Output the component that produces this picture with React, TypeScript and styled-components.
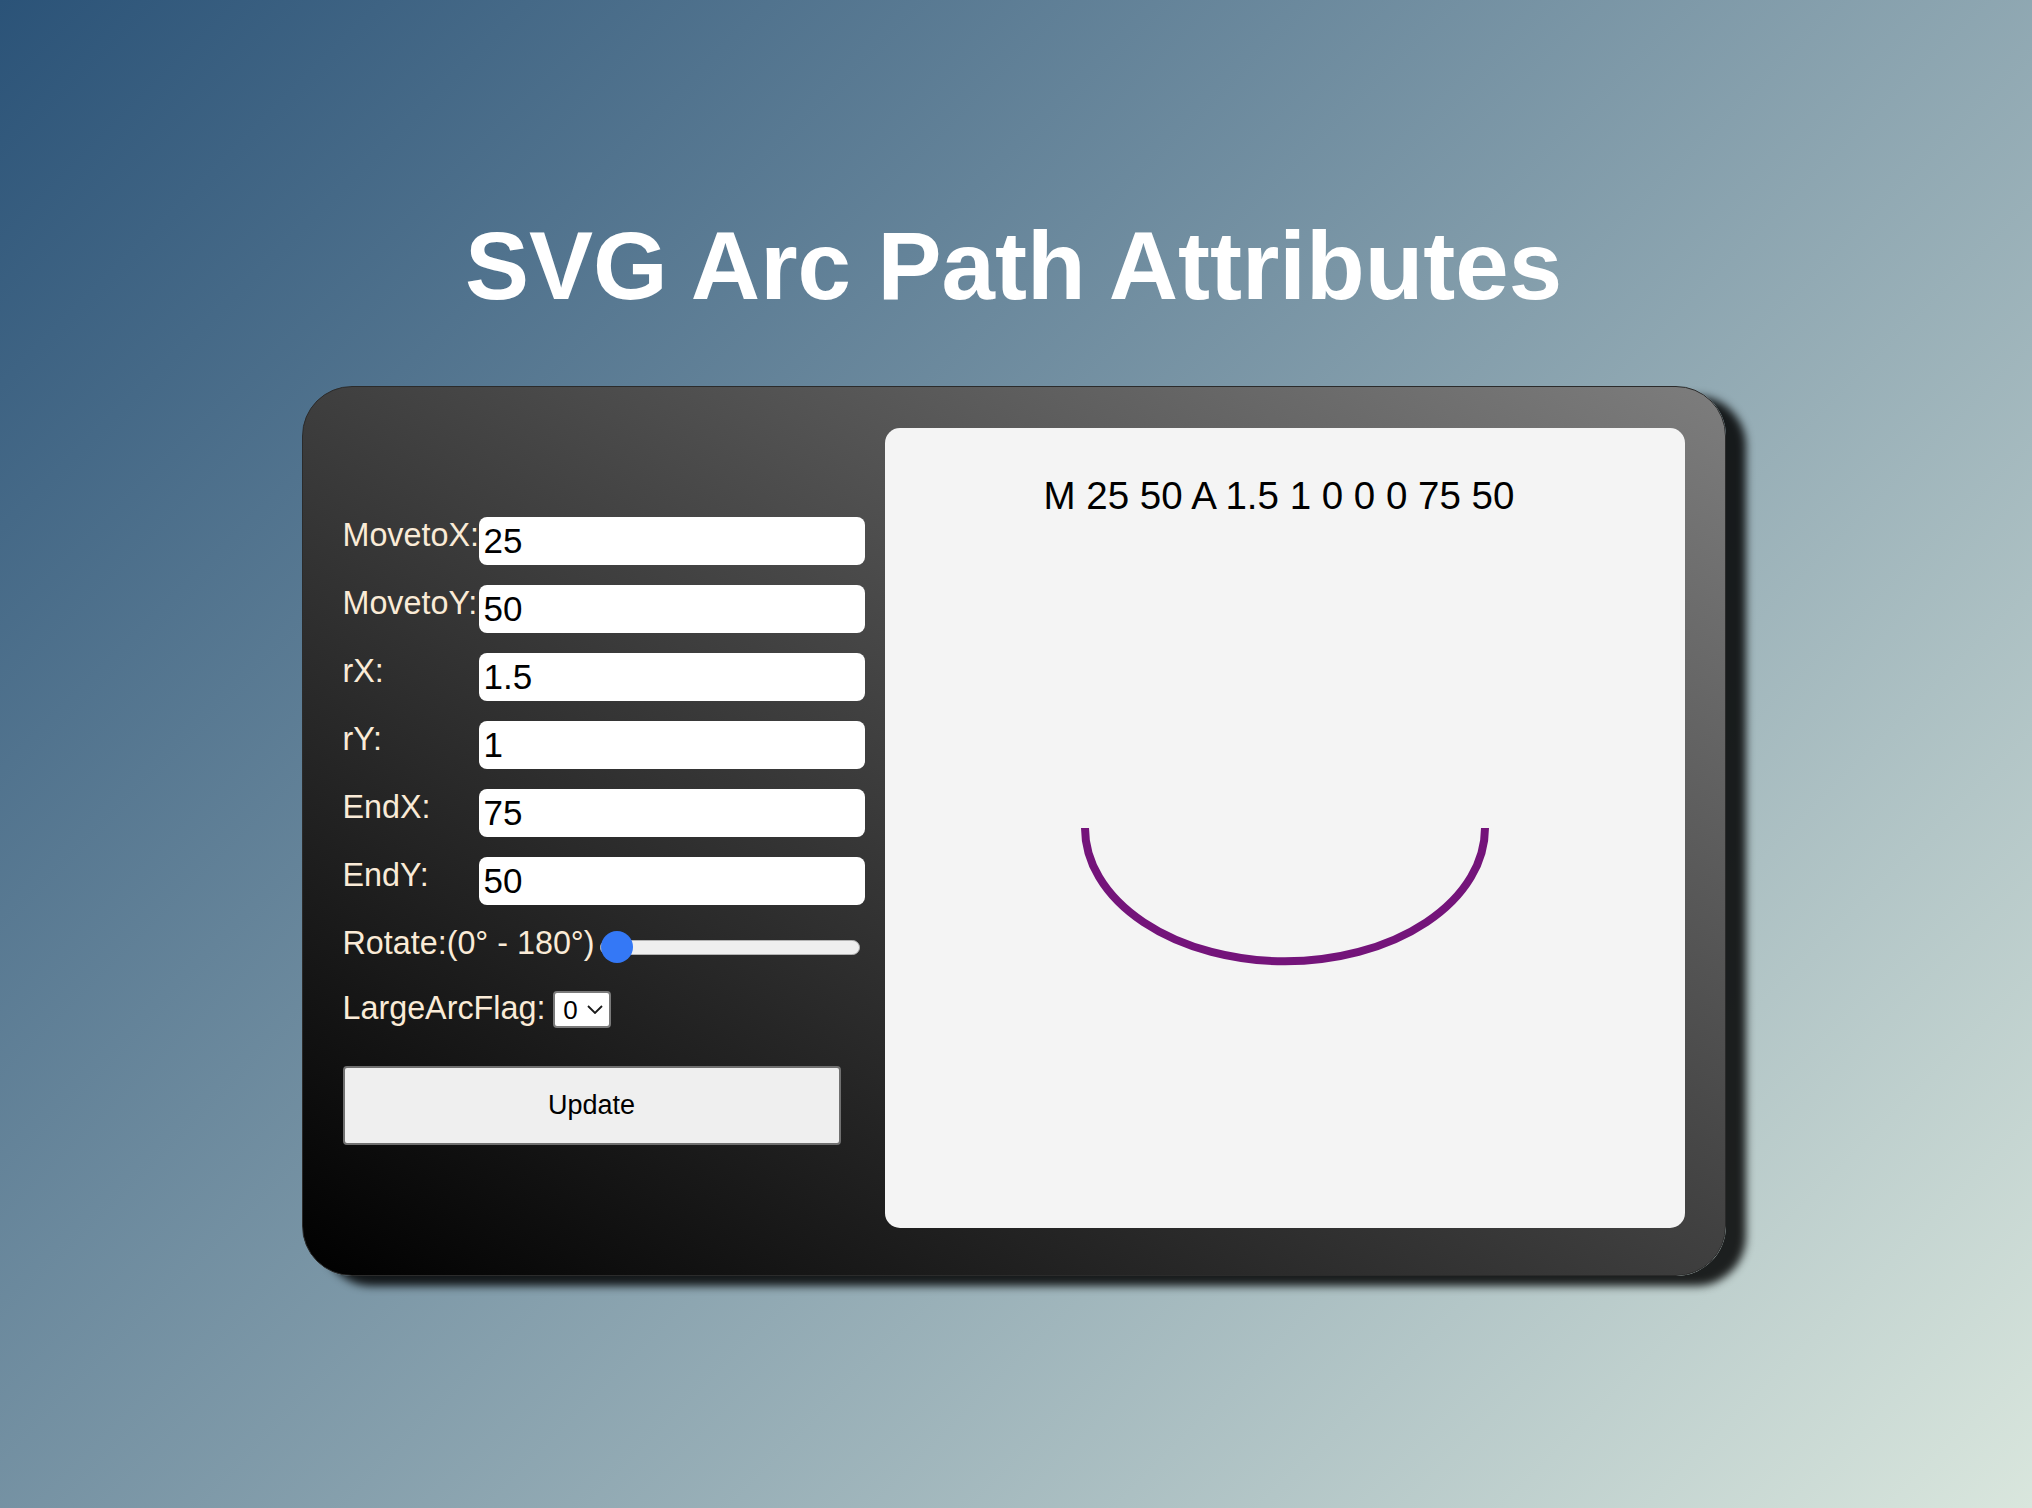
import React, { useState } from "react";
import styled, { createGlobalStyle } from "styled-components";

const GlobalStyle = createGlobalStyle`
  html, body {
    margin: 0;
    padding: 0;
  }
  body {
    font-family: "Liberation Sans", Arial, Helvetica, sans-serif;
  }
  *, *::before, *::after {
    box-sizing: border-box;
  }
`;

const Page = styled.div`
  min-height: 100vh;
  background: linear-gradient(135deg, #2b5378 0%, #d9e6dd 100%);
  display: flex;
  flex-direction: column;
  align-items: center;
  padding: 211px 5px 0 0;
`;

const Title = styled.h1`
  margin: 0 0 65px;
  font-size: 96px;
  font-weight: 700;
  line-height: 1.15;
  color: #ffffff;
`;

const Card = styled.div`
  width: 1424px;
  display: flex;
  align-items: flex-start;
  padding: 41px 40px 47px 40px;
  border: 1px solid #2b2b2b;
  border-radius: 50px;
  background: linear-gradient(to top right, #000000 0%, #7d7d7d 100%);
  box-shadow: 20px 10px 9px rgba(0, 0, 0, 0.85);
`;

const Controls = styled.form`
  flex: 1 1 0;
  min-width: 0;
  display: flex;
  flex-direction: column;
  gap: 20px;
  padding-top: 89px;
  margin: 0 20px 0 0;
`;

const FieldRow = styled.div`
  display: flex;
  align-items: flex-start;
`;

const Label = styled.label<{ $fixed?: boolean }>`
  flex: none;
  width: ${(p) => (p.$fixed ? "136px" : "auto")};
  font-size: 32.3px;
  line-height: normal;
  color: #faebd7;
  white-space: nowrap;
`;

const TextInput = styled.input`
  flex: 1 1 0;
  width: 0;
  min-width: 0;
  height: 48px;
  border: none;
  border-radius: 8px;
  padding: 0 5px;
  background: #ffffff;
  color: #000000;
  font-family: inherit;
  font-size: 35px;
  outline: none;
`;

const InlineRow = styled.div<{ $gap: number; $top?: number }>`
  display: flex;
  align-items: flex-start;
  gap: ${(p) => p.$gap}px;
  margin-top: ${(p) => p.$top ?? 0}px;
`;

const Range = styled.input`
  -webkit-appearance: none;
  appearance: none;
  width: 260px;
  height: 32px;
  margin: 6px 0 0;
  padding: 0;
  background: transparent;
  outline: none;

  &::-webkit-slider-runnable-track {
    height: 15px;
    background: #efefef;
    border: 1px solid #b3b3b3;
    border-radius: 8px;
  }
  &::-webkit-slider-thumb {
    -webkit-appearance: none;
    appearance: none;
    width: 32px;
    height: 32px;
    margin-top: -9.5px;
    border: none;
    border-radius: 50%;
    background: #3478f6;
  }
`;

const SelectWrap = styled.div`
  position: relative;
  display: inline-flex;
  margin-top: 1px;
`;

const Select = styled.select`
  -webkit-appearance: none;
  appearance: none;
  width: 58px;
  height: 37px;
  border: 2px solid #7a7a7a;
  border-radius: 4px;
  background: #ffffff;
  color: #000000;
  font-family: inherit;
  font-size: 26px;
  padding: 0 0 0 8px;
  outline: none;
`;

const Chevron = styled.svg`
  position: absolute;
  right: 8px;
  top: 14px;
  width: 16px;
  height: 9px;
  pointer-events: none;
`;

const UpdateButton = styled.button`
  align-self: flex-start;
  margin-top: 18px;
  width: 498px;
  height: 79px;
  background: #efefef;
  border: 2px solid #707070;
  border-radius: 4px;
  color: #000000;
  font-family: inherit;
  font-size: 27px;
  cursor: pointer;
`;

const Preview = styled.div`
  flex: none;
  width: 800px;
  height: 800px;
  display: grid;
  background: #f4f4f4;
  border-radius: 15px;
  overflow: hidden;
`;

const PathCaption = styled.div`
  grid-area: 1 / 1;
  align-self: start;
  padding: 46px 0 0 159px;
  font-size: 38.5px;
  line-height: normal;
  color: #000000;
  white-space: pre;
`;

const ArcCanvas = styled.svg`
  grid-area: 1 / 1;
  width: 800px;
  height: 800px;
`;

type Fields = {
  mx: string;
  my: string;
  rx: string;
  ry: string;
  ex: string;
  ey: string;
};

const fieldDefs: { key: keyof Fields; label: string }[] = [
  { key: "mx", label: "MovetoX:" },
  { key: "my", label: "MovetoY:" },
  { key: "rx", label: "rX:" },
  { key: "ry", label: "rY:" },
  { key: "ex", label: "EndX:" },
  { key: "ey", label: "EndY:" },
];

const buildPath = (f: Fields, rot: number, large: string) =>
  `M ${f.mx} ${f.my} A ${f.rx} ${f.ry} ${rot} ${large} 0 ${f.ex} ${f.ey}`;

export default function App() {
  const [fields, setFields] = useState<Fields>({
    mx: "25",
    my: "50",
    rx: "1.5",
    ry: "1",
    ex: "75",
    ey: "50",
  });
  const [rotate, setRotate] = useState(0);
  const [largeArc, setLargeArc] = useState("0");
  const [path, setPath] = useState(buildPath(fields, 0, "0"));

  const onSubmit = (e: React.FormEvent) => {
    e.preventDefault();
    setPath(buildPath(fields, rotate, largeArc));
  };

  return (
    <>
      <GlobalStyle />
      <Page>
        <Title>SVG Arc Path Attributes</Title>
        <Card>
          <Controls onSubmit={onSubmit}>
            {fieldDefs.map((d) => (
              <FieldRow key={d.key}>
                <Label $fixed htmlFor={d.key}>
                  {d.label}
                </Label>
                <TextInput
                  id={d.key}
                  type="text"
                  value={fields[d.key]}
                  onChange={(e) =>
                    setFields({ ...fields, [d.key]: e.target.value })
                  }
                />
              </FieldRow>
            ))}
            <InlineRow $gap={5}>
              <Label htmlFor="rotate">Rotate:(0° - 180°)</Label>
              <Range
                id="rotate"
                type="range"
                min={0}
                max={180}
                value={rotate}
                onChange={(e) => setRotate(Number(e.target.value))}
              />
            </InlineRow>
            <InlineRow $gap={8} $top={7}>
              <Label htmlFor="large">LargeArcFlag:</Label>
              <SelectWrap>
                <Select
                  id="large"
                  value={largeArc}
                  onChange={(e) => setLargeArc(e.target.value)}
                >
                  <option value="0">0</option>
                  <option value="1">1</option>
                </Select>
                <Chevron viewBox="0 0 16 9">
                  <polyline
                    points="1,1 8,8 15,1"
                    fill="none"
                    stroke="#1a1a1a"
                    strokeWidth="1.8"
                  />
                </Chevron>
              </SelectWrap>
            </InlineRow>
            <UpdateButton type="submit">Update</UpdateButton>
          </Controls>
          <Preview>
            <PathCaption>{path}</PathCaption>
            <ArcCanvas viewBox="0 0 100 100">
              <path d={path} fill="none" stroke="#74147a" strokeWidth="1" />
            </ArcCanvas>
          </Preview>
        </Card>
      </Page>
    </>
  );
}
